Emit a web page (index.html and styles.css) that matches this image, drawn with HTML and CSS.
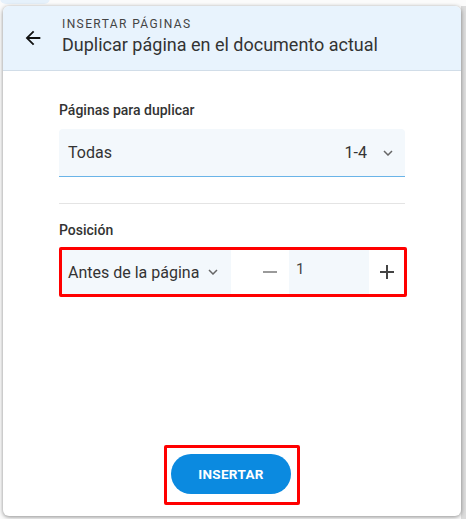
FILE: index.html
```html
<!DOCTYPE html>
<html lang="es">
<head>
    <meta charset="UTF-8">
    <meta name="viewport" content="width=device-width, initial-scale=1.0">
    <title>Insertar páginas</title>
    <link rel="stylesheet" href="styles.css">
</head>
<body>

    <div class="backdrop-pill"></div>
    <div class="scroll-strip"></div>

    <div class="card">
        <div class="header">
            <button class="back" aria-label="Volver">
                <svg width="22" height="22" viewBox="0 0 24 24">
                    <path d="M20 11H7.83l5.59-5.59L12 4l-8 8 8 8 1.41-1.41L7.83 13H20v-2z" fill="#111"/>
                </svg>
            </button>
            <div class="titles">
                <div class="overline">INSERTAR PÁGINAS</div>
                <div class="title">Duplicar página en el documento actual</div>
            </div>
        </div>

        <div class="content">
            <label class="label">Páginas para duplicar</label>
            <div class="select">
                <span>Todas</span>
                <span class="range">1-4</span>
                <svg class="chev" width="10" height="6" viewBox="0 0 10 6">
                    <path d="M1 1l4 4 4-4" fill="none" stroke="#666" stroke-width="1.5"/>
                </svg>
            </div>

            <div class="divider"></div>

            <label class="label">Posición</label>
            <div class="position highlight">
                <div class="pos-select">
                    <span>Antes de la página</span>
                    <svg class="chev" width="10" height="6" viewBox="0 0 10 6">
                        <path d="M1 1l4 4 4-4" fill="none" stroke="#666" stroke-width="1.5"/>
                    </svg>
                </div>
                <div class="step minus">
                    <svg width="16" height="16" viewBox="0 0 16 16">
                        <path d="M1 8h14" stroke="#9a9a9a" stroke-width="2"/>
                    </svg>
                </div>
                <div class="number">1</div>
                <div class="step plus">
                    <svg width="16" height="16" viewBox="0 0 16 16">
                        <path d="M1 8h14M8 1v14" stroke="#444" stroke-width="2"/>
                    </svg>
                </div>
            </div>

            <div class="actions">
                <div class="highlight btn-box">
                    <button class="insert">INSERTAR</button>
                </div>
            </div>
        </div>
    </div>

</body>
</html>
```

FILE: styles.css
```css
body {
    font-family: Roboto, "Liberation Sans", sans-serif;
    background-color: #fbfbfb;
    margin: 0;
    padding: 6px 5px 3px 3px;
    height: 519px;
    box-sizing: border-box;
    position: relative;
    overflow: hidden;
}

/* bits of the app behind the dialog */
.backdrop-pill {
    position: absolute;
    left: 0;
    top: -8px;
    width: 50px;
    height: 12px;
    border-radius: 6px;
    background-color: #e6f1fb;
}

.scroll-strip {
    position: absolute;
    right: 0;
    top: 6px;
    width: 5px;
    height: 513px;
    background-color: #dcdcdc;
}

.card {
    position: relative;
    background-color: #fff;
    border-radius: 6px;
    box-shadow: 0 1px 4px rgba(0, 0, 0, 0.45);
    height: 510px;
    display: flex;
    flex-direction: column;
    overflow: hidden;
}

.header {
    display: flex;
    align-items: center;
    height: 64px;
    background-color: #e8f3fd;
    border-bottom: 1px solid #d1dde8;
    box-sizing: content-box;
}

.back {
    border: none;
    background: none;
    padding: 0;
    width: 22px;
    height: 22px;
    margin: 0 18px 0 19px;
    display: flex;
}

.titles {
    display: flex;
    flex-direction: column;
    gap: 3px;
    margin-top: -4px;
}

.overline {
    font-size: 12px;
    letter-spacing: 1.4px;
    color: #444;
}

.title {
    font-size: 18px;
    color: #333;
}

.content {
    flex: 1;
    display: flex;
    flex-direction: column;
    padding: 29px 56px 11px 56px;
}

.label {
    font-size: 14px;
    font-weight: 500;
    color: #333;
    line-height: 20px;
}

.select {
    margin-top: 9px;
    height: 47px;
    background-color: #f3f8fc;
    border-bottom: 1px solid #6ab4e8;
    border-radius: 4px 4px 0 0;
    display: flex;
    align-items: center;
    padding: 0 12px 0 9px;
    font-size: 16px;
    color: #333;
}

.select .range {
    margin-left: auto;
    margin-right: 16px;
}

.chev {
    flex-shrink: 0;
}

.divider {
    height: 1px;
    background-color: #e4e4e4;
    margin: 26px 0 16px;
}

.highlight {
    border: 3px solid #f00;
    border-radius: 2px;
}

.position {
    margin-top: 7px;
    margin-right: -2px;
    height: 44px;
    display: flex;
    align-items: stretch;
}

.pos-select {
    width: 169px;
    background-color: #f3f8fc;
    display: flex;
    align-items: center;
    justify-content: space-between;
    padding: 0 13px 0 6px;
    box-sizing: border-box;
    font-size: 16px;
    color: #333;
}

.step {
    display: flex;
    align-items: center;
    justify-content: center;
}

.minus {
    width: 58px;
    padding-left: 20px;
    box-sizing: border-box;
}

.number {
    width: 80px;
    background-color: #f3f8fc;
    font-size: 15px;
    color: #444;
    padding: 10px 0 0 7px;
    box-sizing: border-box;
}

.plus {
    flex: 1;
}

.actions {
    margin-top: auto;
    display: flex;
    justify-content: center;
}

.btn-box {
    padding: 6px 6px 8px 4px;
}

.insert {
    width: 120px;
    height: 40px;
    border: none;
    border-radius: 20px;
    background-color: #0b8ae0;
    color: #fff;
    font-family: Roboto, "Liberation Sans", sans-serif;
    font-size: 13.5px;
    font-weight: bold;
    letter-spacing: 0.3px;
    cursor: pointer;
}
```
